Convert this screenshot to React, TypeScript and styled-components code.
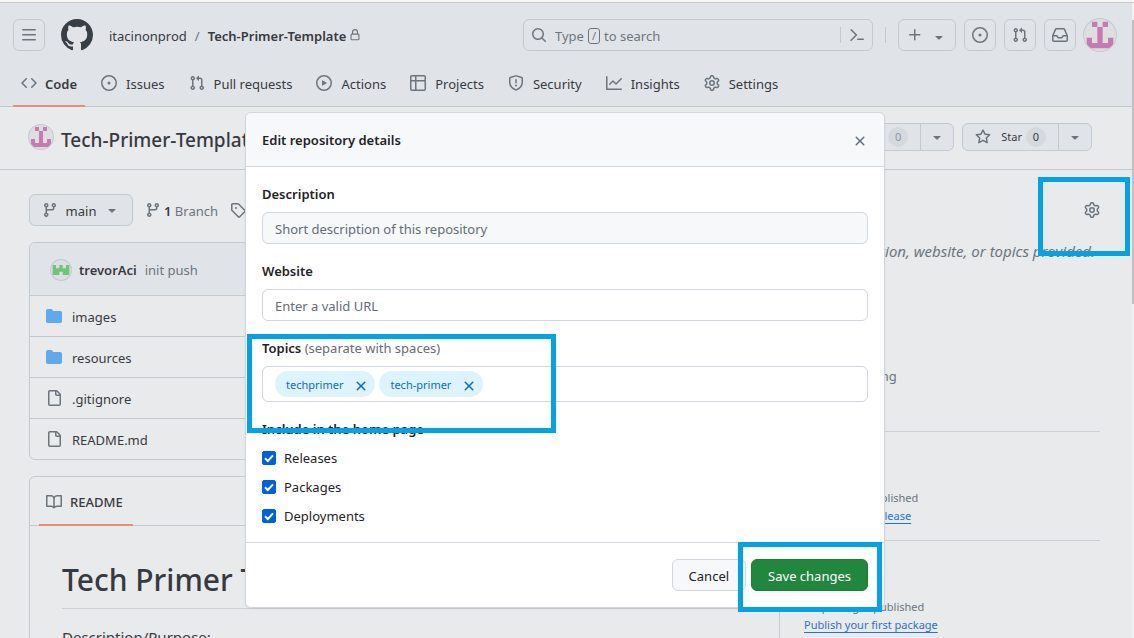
import React from 'react';
import styled, { createGlobalStyle } from 'styled-components';

const color = {
  canvas: '#ffffff',
  subtle: '#f6f8fa',
  border: '#d0d7de',
  borderMuted: '#dbe0e5',
  text: '#1f2328',
  muted: '#656d76',
  link: '#0969da',
  tabMark: '#fd8c73',
  folder: '#54aeff',
  chip: '#ddf4ff',
  success: '#1f883d',
  marker: '#00a2e8',
};

const GlobalStyle = createGlobalStyle`
  *, *::before, *::after { box-sizing: border-box; }
  body {
    margin: 0;
    overflow: hidden;
    background: ${color.canvas};
    color: ${color.text};
    font-family: "Noto Sans", "Open Sans", sans-serif;
    font-size: 13px;
    line-height: 20px;
  }
  button, input { font: inherit; color: inherit; }
  button { cursor: pointer; }
  h1, h2, p, ul { margin: 0; padding: 0; }
  ul { list-style: none; }
  a { color: inherit; text-decoration: none; }
`;

const paths = {
  bars: 'M1 2.75A.75.75 0 0 1 1.75 2h12.5a.75.75 0 0 1 0 1.5H1.75A.75.75 0 0 1 1 2.75Zm0 5A.75.75 0 0 1 1.75 7h12.5a.75.75 0 0 1 0 1.5H1.75A.75.75 0 0 1 1 7.75ZM1.75 12h12.5a.75.75 0 0 1 0 1.5H1.75a.75.75 0 0 1 0-1.5Z',
  mark: 'M8 0c4.42 0 8 3.58 8 8a8.013 8.013 0 0 1-5.45 7.59c-.4.08-.55-.17-.55-.38 0-.27.01-1.13.01-2.2 0-.75-.25-1.23-.54-1.48 1.78-.2 3.65-.88 3.65-3.95 0-.88-.31-1.59-.82-2.15.08-.2.36-1.02-.08-2.12 0 0-.67-.22-2.2.82-.64-.18-1.32-.27-2-.27-.68 0-1.36.09-2 .27-1.53-1.03-2.2-.82-2.2-.82-.44 1.1-.16 1.92-.08 2.12-.51.56-.82 1.28-.82 2.15 0 3.06 1.86 3.75 3.64 3.95-.23.2-.44.55-.51 1.07-.46.21-1.61.55-2.33-.66-.15-.24-.6-.83-1.23-.82-.67.01-.27.38.01.53.34.19.73.9.82 1.13.16.45.68 1.31 2.69.94 0 .67.01 1.3.01 1.49 0 .21-.15.45-.55.38A7.995 7.995 0 0 1 0 8c0-4.42 3.58-8 8-8Z',
  lock: 'M4 4a4 4 0 0 1 8 0v2h.25c.966 0 1.75.784 1.75 1.75v5.5A1.75 1.75 0 0 1 12.25 15h-8.5A1.75 1.75 0 0 1 2 13.25v-5.5C2 6.784 2.784 6 3.75 6H4Zm8.25 3.5h-8.5a.25.25 0 0 0-.25.25v5.5c0 .138.112.25.25.25h8.5a.25.25 0 0 0 .25-.25v-5.5a.25.25 0 0 0-.25-.25ZM10.5 6V4a2.5 2.5 0 1 0-5 0v2Z',
  search: 'M10.68 11.74a6 6 0 0 1-7.922-8.982 6 6 0 0 1 8.982 7.922l3.04 3.04a.749.749 0 0 1-.326 1.275.749.749 0 0 1-.734-.215ZM11.5 7a4.499 4.499 0 1 0-8.997 0A4.499 4.499 0 0 0 11.5 7Z',
  command: 'm6.354 8.04-4.773 4.773a.75.75 0 1 0 1.061 1.06L7.945 8.57a.75.75 0 0 0 0-1.06L2.642 2.206a.75.75 0 0 0-1.06 1.061L6.353 8.04ZM8.75 11.5a.75.75 0 0 0 0 1.5h5.5a.75.75 0 0 0 0-1.5h-5.5Z',
  plus: 'M7.75 2a.75.75 0 0 1 .75.75V7h4.25a.75.75 0 0 1 0 1.5H8.5v4.25a.75.75 0 0 1-1.5 0V8.5H2.75a.75.75 0 0 1 0-1.5H7V2.75A.75.75 0 0 1 7.75 2Z',
  caret: 'm4.427 7.427 3.396 3.396a.25.25 0 0 0 .354 0l3.396-3.396A.25.25 0 0 0 11.396 7H4.604a.25.25 0 0 0-.177.427Z',
  code: 'm11.28 3.22 4.25 4.25a.75.75 0 0 1 0 1.06l-4.25 4.25a.749.749 0 0 1-1.275-.326.749.749 0 0 1 .215-.734L13.94 8l-3.72-3.72a.749.749 0 0 1 .326-1.275.749.749 0 0 1 .734.215Zm-6.56 0a.751.751 0 0 1 1.042.018.751.751 0 0 1 .018 1.042L2.06 8l3.72 3.72a.749.749 0 0 1-.326 1.275.749.749 0 0 1-.734-.215L.47 8.53a.75.75 0 0 1 0-1.06Z',
  issue: 'M8 9.5a1.5 1.5 0 1 0 0-3 1.5 1.5 0 0 0 0 3ZM8 0a8 8 0 1 1 0 16A8 8 0 0 1 8 0ZM1.5 8a6.5 6.5 0 1 0 13 0 6.5 6.5 0 0 0-13 0Z',
  pull: 'M1.5 3.25a2.25 2.25 0 1 1 3 2.122v5.256a2.251 2.251 0 1 1-1.5 0V5.372A2.25 2.25 0 0 1 1.5 3.25Zm5.677-.177L9.573.677A.25.25 0 0 1 10 .854V2.5h1A2.5 2.5 0 0 1 13.5 5v5.628a2.251 2.251 0 1 1-1.5 0V5a1 1 0 0 0-1-1h-1v1.646a.25.25 0 0 1-.427.177L7.177 3.427a.25.25 0 0 1 0-.354ZM3.75 2.5a.75.75 0 1 0 0 1.5.75.75 0 0 0 0-1.5Zm0 9.5a.75.75 0 1 0 0 1.5.75.75 0 0 0 0-1.5Zm8.25.75a.75.75 0 1 0 1.5 0 .75.75 0 0 0-1.5 0Z',
  play: 'M8 0a8 8 0 1 1 0 16A8 8 0 0 1 8 0ZM1.5 8a6.5 6.5 0 1 0 13 0 6.5 6.5 0 0 0-13 0Zm4.879-2.773 4.264 2.559a.25.25 0 0 1 0 .428l-4.264 2.559A.25.25 0 0 1 6 10.559V5.442a.25.25 0 0 1 .379-.215Z',
  table: 'M0 1.75C0 .784.784 0 1.75 0h12.5C15.216 0 16 .784 16 1.75v12.5A1.75 1.75 0 0 1 14.25 16H1.75A1.75 1.75 0 0 1 0 14.25ZM6.5 6.5v8h7.75a.25.25 0 0 0 .25-.25V6.5Zm8-1.5V1.75a.25.25 0 0 0-.25-.25H6.5V5Zm-13 1.5v7.75c0 .138.112.25.25.25H5v-8ZM5 5V1.5H1.75a.25.25 0 0 0-.25.25V5Z',
  shield: 'M7.467.133a1.748 1.748 0 0 1 1.066 0l5.25 1.68A1.75 1.75 0 0 1 15 3.48V7c0 1.566-.32 3.182-1.303 4.682-.983 1.498-2.585 2.813-5.032 3.855a1.697 1.697 0 0 1-1.33 0c-2.447-1.042-4.049-2.357-5.032-3.855C1.32 10.182 1 8.566 1 7V3.48a1.75 1.75 0 0 1 1.217-1.667Zm.61 1.429a.25.25 0 0 0-.153 0l-5.25 1.68a.25.25 0 0 0-.174.238V7c0 1.358.275 2.666 1.057 3.86.784 1.194 2.121 2.34 4.366 3.297a.196.196 0 0 0 .154 0c2.245-.956 3.582-2.104 4.366-3.298C13.225 9.666 13.5 8.36 13.5 7V3.48a.251.251 0 0 0-.174-.237l-5.25-1.68ZM8.75 4.75v3a.75.75 0 0 1-1.5 0v-3a.75.75 0 0 1 1.5 0ZM9 10.5a1 1 0 1 1-2 0 1 1 0 0 1 2 0Z',
  graph: 'M1.5 1.75V13.5h13.75a.75.75 0 0 1 0 1.5H.75a.75.75 0 0 1-.75-.75V1.75a.75.75 0 0 1 1.5 0Zm14.28 2.53-5.25 5.25a.75.75 0 0 1-1.06 0L7 7.06 4.28 9.78a.751.751 0 0 1-1.042-.018.751.751 0 0 1-.018-1.042l3.25-3.25a.75.75 0 0 1 1.06 0L10 7.94l4.72-4.72a.751.751 0 0 1 1.042.018.751.751 0 0 1 .018 1.042Z',
  gear: 'M8 0a8.2 8.2 0 0 1 .701.031C9.444.095 9.99.645 10.16 1.29l.288 1.107c.018.066.079.158.212.224.231.114.454.243.668.386.123.082.233.09.299.071l1.103-.303c.644-.176 1.392.021 1.82.63.27.385.506.792.704 1.218.315.675.111 1.422-.364 1.891l-.814.806c-.049.048-.098.147-.088.294.016.257.016.515 0 .772-.01.147.038.246.088.294l.814.806c.475.469.679 1.216.364 1.891a7.977 7.977 0 0 1-.704 1.217c-.428.61-1.176.807-1.82.63l-1.102-.302c-.067-.019-.177-.011-.3.071a5.909 5.909 0 0 1-.668.386c-.133.066-.194.158-.211.224l-.29 1.106c-.168.646-.715 1.196-1.458 1.26a8.006 8.006 0 0 1-1.402 0c-.743-.064-1.289-.614-1.458-1.26l-.289-1.106c-.018-.066-.079-.158-.212-.224a5.738 5.738 0 0 1-.668-.386c-.123-.082-.233-.09-.299-.071l-1.103.303c-.644.176-1.392-.021-1.82-.63a8.12 8.12 0 0 1-.704-1.218c-.315-.675-.111-1.422.363-1.891l.815-.806c.05-.048.098-.147.088-.294a6.214 6.214 0 0 1 0-.772c.01-.147-.038-.246-.088-.294l-.815-.806C.635 6.045.431 5.298.746 4.623a7.92 7.92 0 0 1 .704-1.217c.428-.61 1.176-.807 1.82-.63l1.102.302c.067.019.177.011.3-.071.214-.143.437-.272.668-.386.133-.066.194-.158.211-.224l.29-1.106C6.009.645 6.556.095 7.299.03 7.53.01 7.764 0 8 0Zm-.571 1.525c-.036.003-.108.036-.137.146l-.289 1.105c-.147.561-.549.967-.998 1.189-.173.086-.34.183-.5.29-.417.278-.97.423-1.529.27l-1.103-.303c-.109-.03-.175.016-.195.045-.22.312-.412.644-.573.99-.014.031-.021.11.059.19l.815.806c.411.406.562.957.53 1.456a4.709 4.709 0 0 0 0 .582c.032.499-.119 1.05-.53 1.456l-.815.806c-.081.08-.073.159-.059.19.162.346.353.677.573.989.02.03.085.076.195.046l1.102-.303c.56-.153 1.113-.008 1.53.27.161.107.328.204.501.29.447.222.85.629.997 1.189l.289 1.105c.029.109.101.143.137.146a6.6 6.6 0 0 0 1.142 0c.036-.003.108-.036.137-.146l.289-1.105c.147-.561.549-.967.998-1.189.173-.086.34-.183.5-.29.417-.278.97-.423 1.529-.27l1.103.303c.109.029.175-.016.195-.045.22-.313.411-.644.573-.99.014-.031.021-.11-.059-.19l-.815-.806c-.411-.406-.562-.957-.53-1.456a4.709 4.709 0 0 0 0-.582c-.032-.499.119-1.05.53-1.456l.815-.806c.081-.08.073-.159.059-.19a6.464 6.464 0 0 0-.573-.989c-.02-.03-.085-.076-.195-.046l-1.102.303c-.56.153-1.113.008-1.53-.27a4.44 4.44 0 0 0-.501-.29c-.447-.222-.85-.629-.997-1.189l-.289-1.105c-.029-.11-.101-.143-.137-.146a6.6 6.6 0 0 0-1.142 0ZM11 8a3 3 0 1 1-6 0 3 3 0 0 1 6 0ZM9.5 8a1.5 1.5 0 1 0-3.001.001A1.5 1.5 0 0 0 9.5 8Z',
  branch: 'M9.5 3.25a2.25 2.25 0 1 1 3 2.122V6A2.5 2.5 0 0 1 10 8.5H6a1 1 0 0 0-1 1v1.128a2.251 2.251 0 1 1-1.5 0V5.372a2.25 2.25 0 1 1 1.5 0v1.836A2.493 2.493 0 0 1 6 7h4a1 1 0 0 0 1-1v-.628A2.25 2.25 0 0 1 9.5 3.25Zm-6 0a.75.75 0 1 0 1.5 0 .75.75 0 0 0-1.5 0Zm8.25-.75a.75.75 0 1 0 0 1.5.75.75 0 0 0 0-1.5ZM4.25 12a.75.75 0 1 0 0 1.5.75.75 0 0 0 0-1.5Z',
  tag: 'M1 7.775V2.75C1 1.784 1.784 1 2.75 1h5.025c.464 0 .91.184 1.238.513l6.25 6.25a1.75 1.75 0 0 1 0 2.474l-5.026 5.026a1.75 1.75 0 0 1-2.474 0l-6.25-6.25A1.752 1.752 0 0 1 1 7.775Zm1.5 0c0 .066.026.13.073.177l6.25 6.25a.25.25 0 0 0 .354 0l5.025-5.025a.25.25 0 0 0 0-.354l-6.25-6.25a.25.25 0 0 0-.177-.073H2.75a.25.25 0 0 0-.25.25ZM6 5a1 1 0 1 1 0 2 1 1 0 0 1 0-2Z',
  folder: 'M1.75 1A1.75 1.75 0 0 0 0 2.75v10.5C0 14.216.784 15 1.75 15h12.5A1.75 1.75 0 0 0 16 13.25v-8.5A1.75 1.75 0 0 0 14.25 3H7.5a.25.25 0 0 1-.2-.1l-.9-1.2C6.07 1.26 5.55 1 5 1H1.75Z',
  file: 'M2 1.75C2 .784 2.784 0 3.75 0h6.586c.464 0 .909.184 1.237.513l2.914 2.914c.329.328.513.773.513 1.237v9.586A1.75 1.75 0 0 1 13.25 16h-9.5A1.75 1.75 0 0 1 2 14.25Zm1.75-.25a.25.25 0 0 0-.25.25v12.5c0 .138.112.25.25.25h9.5a.25.25 0 0 0 .25-.25V6h-2.75A1.75 1.75 0 0 1 9 4.25V1.5Zm6.75.062V4.25c0 .138.112.25.25.25h2.688l-.011-.013-2.914-2.914-.013-.011Z',
  book: 'M0 1.75A.75.75 0 0 1 .75 1h4.253c1.227 0 2.317.59 3 1.501A3.743 3.743 0 0 1 11.006 1h4.245a.75.75 0 0 1 .75.75v10.5a.75.75 0 0 1-.75.75h-4.507a2.25 2.25 0 0 0-1.591.659l-.622.621a.75.75 0 0 1-1.06 0l-.622-.621A2.25 2.25 0 0 0 5.258 13H.75a.75.75 0 0 1-.75-.75Zm7.251 10.324.004-5.073-.002-2.253A2.25 2.25 0 0 0 5.003 2.5H1.5v9h3.757a3.75 3.75 0 0 1 1.994.574ZM8.755 4.75l-.004 7.322a3.752 3.752 0 0 1 1.992-.572H14.5v-9h-3.495a2.25 2.25 0 0 0-2.25 2.25Z',
  close: 'M3.72 3.72a.75.75 0 0 1 1.06 0L8 6.94l3.22-3.22a.749.749 0 0 1 1.275.326.749.749 0 0 1-.215.734L9.06 8l3.22 3.22a.749.749 0 0 1-.326 1.275.749.749 0 0 1-.734-.215L8 9.06l-3.22 3.22a.751.751 0 0 1-1.042-.018.751.751 0 0 1-.018-1.042L6.94 8 3.72 4.78a.75.75 0 0 1 0-1.06Z',
  inbox: 'M2.8 2.06A1.75 1.75 0 0 1 4.41 1h7.18c.7 0 1.333.417 1.61 1.06l2.74 6.395c.04.093.06.194.06.295v4.5A1.75 1.75 0 0 1 14.25 15H1.75A1.75 1.75 0 0 1 0 13.25v-4.5c0-.101.02-.202.06-.295Zm1.61.44a.25.25 0 0 0-.23.152L1.887 8H4.75a.75.75 0 0 1 .6.3L6.625 10h2.75l1.275-1.7a.75.75 0 0 1 .6-.3h2.863L11.82 2.652a.25.25 0 0 0-.23-.152Zm10.09 7h-2.875l-1.275 1.7a.75.75 0 0 1-.6.3h-3.5a.75.75 0 0 1-.6-.3L4.375 9.5H1.5v3.75c0 .138.112.25.25.25h12.5a.25.25 0 0 0 .25-.25Z',
  star: 'M8 .25a.75.75 0 0 1 .673.418l1.882 3.815 4.21.612a.75.75 0 0 1 .416 1.279l-3.046 2.97.719 4.192a.751.751 0 0 1-1.088.791L8 12.347l-3.766 1.98a.75.75 0 0 1-1.088-.79l.72-4.194L.818 6.374a.75.75 0 0 1 .416-1.28l4.21-.611L7.327.668A.75.75 0 0 1 8 .25Zm0 2.445L6.615 5.5a.75.75 0 0 1-.564.41l-3.097.45 2.24 2.184a.75.75 0 0 1 .216.664l-.528 3.084 2.769-1.456a.75.75 0 0 1 .698 0l2.77 1.456-.53-3.084a.75.75 0 0 1 .216-.664l2.24-2.183-3.096-.45a.75.75 0 0 1-.564-.41L8 2.694Z',
};

type IconName = keyof typeof paths;

const Svg = styled.svg<{ $tone?: string }>`
  display: block;
  flex: none;
  fill: ${(p) => p.$tone ?? color.muted};
`;

function Icon({ name, size = 16, tone }: { name: IconName; size?: number; tone?: string }) {
  return (
    <Svg viewBox="0 0 16 16" width={size} height={size} $tone={tone} aria-hidden="true">
      <path fillRule="evenodd" d={paths[name]} />
    </Svg>
  );
}

const AvatarFrame = styled.svg`
  display: block;
  flex: none;
  border-radius: 50%;
  background: #f0f0f0;
  box-shadow: 0 0 0 1px ${color.border};
`;

const identicons = {
  pink: { tone: '#d674b6', rows: ['.X.X.', '..X..', '..X..', 'X.X.X', 'XXXXX'] },
  green: { tone: '#68cf75', rows: ['.....', 'X.X.X', 'XXXXX', 'XX.XX', '.....'] },
};

function Avatar({ kind, size }: { kind: keyof typeof identicons; size: number }) {
  const { tone, rows } = identicons[kind];
  const cells = rows.flatMap((row, y) =>
    [...row].map((cell, x) => (cell === 'X' ? `M${1 + x * 2} ${1 + y * 2}h2v2h-2Z` : '')),
  );
  return (
    <AvatarFrame viewBox="0 0 12 12" width={size} height={size} aria-hidden="true">
      <path d={cells.join('')} fill={tone} />
    </AvatarFrame>
  );
}

/* Text beside an icon, dropped so that its x-height centres on the icon */
const Label = styled.span`
  padding-top: 2px;
`;

/* Window frame */

const Window = styled.div`
  display: flex;
  flex-direction: column;
  height: 100vh;
  overflow: hidden;
`;

const WindowEdge = styled.div`
  flex: none;
  height: 3px;
  background: #f7f7f7;
  border-bottom: 1px solid #c8c8c8;
`;

const Viewport = styled.div`
  flex: 1;
  min-height: 0;
  display: flex;
`;

const Page = styled.div`
  position: relative;
  flex: 1;
  min-width: 0;
  overflow: hidden;
`;

const ScrollTrack = styled.div`
  flex: none;
  width: 2px;
  padding-top: 17px;
  background: #f1f1f1;
`;

const ScrollThumb = styled.div`
  height: 46%;
  background: #c1c1c1;
`;

/* Global header */

const Header = styled.header`
  height: 104px;
  padding: 16px 16px 0 13px;
  background: ${color.subtle};
  border-bottom: 1px solid ${color.border};
`;

const HeaderRow = styled.div`
  display: flex;
  align-items: center;
  height: 32px;
`;

const SquareButton = styled.button`
  display: flex;
  align-items: center;
  justify-content: center;
  flex: none;
  width: 32px;
  height: 32px;
  padding: 0;
  background: transparent;
  border: 1px solid ${color.border};
  border-radius: 6px;
`;

const HomeLink = styled.a`
  margin: 0 16px;
`;

const Crumbs = styled.nav`
  display: flex;
  align-items: center;
  gap: 8px;
  white-space: nowrap;
`;

const CrumbCurrent = styled.a`
  display: flex;
  align-items: center;
  gap: 3px;
  font-weight: 600;
`;

const Slash = styled(Label)`
  color: ${color.muted};
`;

const HeaderTools = styled.div`
  display: flex;
  align-items: center;
  gap: 8px;
  margin-left: auto;
`;

const SearchBox = styled.button`
  display: flex;
  align-items: center;
  width: 350px;
  height: 32px;
  padding: 0 7px;
  background: transparent;
  border: 1px solid ${color.border};
  border-radius: 6px;
  color: ${color.muted};
`;

const SearchHint = styled(Label)`
  display: flex;
  align-items: center;
  gap: 4px;
  flex: 1;
  margin-left: 8px;
`;

const Key = styled.kbd`
  height: 16px;
  padding: 0 3px;
  border: 1px solid ${color.muted};
  border-radius: 3px;
  font-family: inherit;
  font-size: 11px;
  line-height: 14px;
`;

const Rule = styled.span<{ $space: number }>`
  width: 1px;
  height: 16px;
  margin: 0 ${(p) => p.$space}px;
  background: ${color.border};
`;

const CreateButton = styled(SquareButton)`
  gap: 8px;
  width: 58px;
`;

const CaretDrop = styled.span`
  padding-top: 4px;
`;

const Tabs = styled.nav`
  display: flex;
  gap: 8px;
  margin-top: 8px;
  height: 48px;
`;

const Tab = styled.a<{ $active?: boolean }>`
  display: flex;
  align-items: center;
  gap: ${(p) => (p.$active ? 8 : 9)}px;
  padding: 2px 8px 0;
  white-space: nowrap;
  border-bottom: 2px solid ${(p) => (p.$active ? color.tabMark : 'transparent')};
  font-weight: ${(p) => (p.$active ? 600 : 400)};
`;

/* Repository heading */

const RepoHead = styled.div`
  display: flex;
  align-items: center;
  height: 63px;
  padding: 0 40px 2px 29px;
  gap: 8px;
  border-bottom: 1px solid ${color.border};
`;

const RepoTitle = styled.h1`
  flex: 1;
  min-width: 0;
  padding-top: 6px;
  font-size: 19px;
  line-height: 28px;
  font-weight: 500;
  white-space: nowrap;
`;

const ActionGroup = styled.div`
  display: flex;
  flex: none;
  height: 28px;
  border: 1px solid ${color.border};
  border-radius: 6px;
  background: ${color.subtle};
  overflow: hidden;
`;

const ActionMain = styled.button`
  display: flex;
  align-items: center;
  gap: 4px;
  padding: 0 12px;
  border: 0;
  background: transparent;
  font-size: 11px;
`;

const ActionLabel = styled.span`
  margin-left: 6px;
`;

const ActionCaret = styled.button`
  display: flex;
  align-items: center;
  justify-content: center;
  width: 33px;
  padding: 0;
  border: 0;
  border-left: 1px solid ${color.border};
  background: transparent;
`;

const Counter = styled.span<{ $dim?: boolean }>`
  min-width: 20px;
  height: 20px;
  border-radius: 10px;
  background: #e7eaee;
  color: ${(p) => (p.$dim ? '#8c959f' : color.text)};
  line-height: 20px;
  text-align: center;
`;

/* Repository body */

const RepoBody = styled.main`
  display: grid;
  grid-template-columns: minmax(0, 1fr) 296px;
  gap: 24px;
  padding: 24px 32px 0 29px;
`;

const Column = styled.div`
  display: flex;
  flex-direction: column;
  gap: 16px;
`;

const Toolbar = styled.div`
  display: flex;
  align-items: center;
  gap: 12px;
  height: 32px;
  color: ${color.muted};
`;

const BranchButton = styled.button`
  display: flex;
  align-items: center;
  justify-content: space-between;
  width: 104px;
  height: 32px;
  padding: 0 12px;
  background: ${color.subtle};
  border: 1px solid ${color.border};
  border-radius: 6px;
  color: ${color.text};
`;

const ToolLink = styled.a`
  display: flex;
  align-items: center;
  gap: 3px;
`;

const Strong = styled.strong`
  font-weight: 600;
  color: ${color.text};
`;

const Box = styled.section`
  border: 1px solid ${color.border};
  border-radius: 6px;
`;

const CommitBar = styled.div`
  display: flex;
  align-items: center;
  gap: 8px;
  height: 52px;
  padding: 2px 21px 0;
  background: ${color.subtle};
  border-radius: 6px 6px 0 0;
  color: ${color.muted};
`;

const FileRow = styled.li`
  display: flex;
  align-items: center;
  gap: 10px;
  height: 41px;
  padding: 0 16px;
  border-top: 1px solid ${color.border};
`;

const ReadmeBar = styled.div`
  display: flex;
  height: 49px;
  padding: 0 9px;
  border-bottom: 1px solid ${color.border};
`;

const ReadmeTab = styled.a`
  display: flex;
  align-items: center;
  gap: 8px;
  height: 49px;
  padding: 2px 10px 0 7px;
  border-bottom: 2px solid ${color.tabMark};
  font-weight: 500;
`;

const ReadmeBody = styled.div`
  padding: 32px;
`;

const ReadmeTitle = styled.h1`
  margin-bottom: 16px;
  padding-bottom: 6px;
  border-bottom: 1px solid ${color.borderMuted};
  font-size: 30px;
  line-height: 44px;
  font-weight: 500;
`;

const ReadmeText = styled.p`
  font-size: 15px;
  line-height: 24px;
`;

const SideHeading = styled.h2`
  font-size: 15px;
  line-height: 24px;
  font-weight: 600;
`;

const AboutHead = styled.div`
  display: flex;
  align-items: center;
  justify-content: space-between;
  height: 32px;
`;

const BareButton = styled.button`
  display: flex;
  padding: 0;
  border: 0;
  background: transparent;
`;

const AboutText = styled.p`
  margin: 13px 0 16px;
  font-size: 15px;
  line-height: 24px;
  font-style: italic;
  text-align: center;
  color: ${color.muted};
  white-space: nowrap;
`;

const FactList = styled.ul`
  display: grid;
  gap: 9px;
  margin-bottom: 16px;
  color: ${color.muted};
`;

const Fact = styled.li`
  display: flex;
  align-items: center;
  gap: 10px;
`;

const SideSection = styled.section`
  display: flex;
  flex-direction: column;
  align-items: flex-start;
  height: 109px;
  padding-top: 24px;
  border-top: 1px solid ${color.borderMuted};
  font-size: 11px;
  line-height: 18px;
  color: ${color.muted};
`;

const SideNote = styled.p`
  margin-top: 9px;
`;

const SideLink = styled.a`
  color: ${color.link};
  text-decoration: underline;
  text-underline-offset: 3px;
`;

/* Dialog */

const Backdrop = styled.div`
  position: absolute;
  inset: 0;
  display: flex;
  justify-content: center;
  align-items: flex-start;
  padding: 109px 2px 0 0;
  background: rgba(140, 149, 159, 0.2);
`;

const Dialog = styled.div`
  position: relative;
  width: 640px;
  max-width: 100%;
  background: ${color.canvas};
  border: 1px solid ${color.border};
  border-radius: 6px;
  box-shadow: 0 1px 2px rgba(140, 149, 159, 0.2);
`;

const DialogHead = styled.div`
  display: flex;
  align-items: center;
  justify-content: space-between;
  height: 54px;
  padding: 0 16px;
  background: ${color.subtle};
  border-bottom: 1px solid ${color.border};
  border-radius: 6px 6px 0 0;
`;

const DialogTitle = styled.h2`
  font-size: 13px;
  line-height: 20px;
  font-weight: 600;
`;

const CloseButton = styled(BareButton)`
  padding-top: 2px;
`;

const DialogBody = styled.form`
  display: flex;
  flex-direction: column;
  gap: 17px;
  padding: 17px 16px 16px;
`;

const Field = styled.div`
  display: flex;
  flex-direction: column;
  gap: 8px;
`;

const FieldLabel = styled.label`
  font-weight: 600;
`;

const FieldNote = styled.span`
  font-weight: 400;
  color: ${color.muted};
`;

const TextInput = styled.input<{ $shaded?: boolean }>`
  width: 100%;
  height: 32px;
  padding: 2px 12px 0;
  background: ${(p) => (p.$shaded ? color.subtle : color.canvas)};
  border: 1px solid ${color.border};
  border-radius: 6px;
  outline: none;
  &::placeholder { color: ${color.muted}; opacity: 1; }
`;

const TopicBox = styled.div`
  display: flex;
  align-items: center;
  gap: 4px;
  height: 36px;
  padding: 0 12px;
  border: 1px solid ${color.border};
  border-radius: 6px;
`;

const Chip = styled.span`
  display: flex;
  align-items: center;
  gap: 10px;
  height: 26px;
  padding: 2px 6px 0 11px;
  border-radius: 13px;
  background: ${color.chip};
  color: ${color.link};
  font-size: 11px;
`;

const TopicInput = styled.input`
  flex: 1;
  min-width: 0;
  border: 0;
  outline: none;
`;

const Options = styled.fieldset`
  display: grid;
  gap: 9px;
  margin: 0;
  padding: 0;
  border: 0;
`;

const Legend = styled.legend`
  margin-bottom: 9px;
  padding: 0;
  font-weight: 600;
`;

const Option = styled.label`
  display: flex;
  align-items: center;
  gap: 8px;
`;

const Tick = styled.span`
  display: grid;
  width: 14px;
  height: 14px;
  > * { grid-area: 1 / 1; }
`;

const TickInput = styled.input`
  appearance: none;
  width: 14px;
  height: 14px;
  margin: 0;
  border: 1px solid ${color.muted};
  border-radius: 2px;
  &:checked { background: #0061df; border-color: #0061df; }
  & + svg { visibility: hidden; }
  &:checked + svg { visibility: visible; }
`;

const TickMark = styled.svg`
  pointer-events: none;
  fill: none;
  stroke: #fff;
  stroke-width: 2;
`;

const DialogFoot = styled.div`
  display: flex;
  justify-content: flex-end;
  gap: 5px;
  padding: 16px;
  border-top: 1px solid ${color.border};
`;

const Button = styled.button<{ $primary?: boolean }>`
  height: 32px;
  padding: 2px 16px 0;
  border: 1px solid ${(p) => (p.$primary ? '#1c7c38' : color.border)};
  border-radius: 6px;
  background: ${(p) => (p.$primary ? color.success : color.subtle)};
  color: ${(p) => (p.$primary ? '#fff' : color.text)};
`;

/* Highlight frames that sit over the interface */

const Marker = styled.div`
  position: absolute;
  border: 5px solid ${color.marker};
  pointer-events: none;
`;

const TopicMarker = styled(Marker)`
  left: 1px;
  top: 221px;
  width: 309px;
  height: 99px;
`;

const SaveMarker = styled(Marker)`
  right: 2px;
  bottom: -5px;
  width: 144px;
  height: 70px;
`;

const GearMarker = styled(Marker)`
  right: 2px;
  top: 174px;
  width: 92px;
  height: 79px;
`;

const tabs: { icon: IconName; label: string }[] = [
  { icon: 'code', label: 'Code' },
  { icon: 'issue', label: 'Issues' },
  { icon: 'pull', label: 'Pull requests' },
  { icon: 'play', label: 'Actions' },
  { icon: 'table', label: 'Projects' },
  { icon: 'shield', label: 'Security' },
  { icon: 'graph', label: 'Insights' },
  { icon: 'gear', label: 'Settings' },
];

const files: { icon: IconName; name: string }[] = [
  { icon: 'folder', name: 'images' },
  { icon: 'folder', name: 'resources' },
  { icon: 'file', name: '.gitignore' },
  { icon: 'file', name: 'README.md' },
];

const facts: { icon: IconName; label: string }[] = [
  { icon: 'book', label: 'Readme' },
  { icon: 'graph', label: 'Activity' },
  { icon: 'star', label: '0 stars' },
  { icon: 'issue', label: '0 watching' },
  { icon: 'branch', label: '0 forks' },
];

export default function App() {
  return (
    <Window>
      <GlobalStyle />
      <WindowEdge />
      <Viewport>
        <Page>
          <Header>
            <HeaderRow>
              <SquareButton aria-label="Open menu"><Icon name="bars" /></SquareButton>
              <HomeLink href="#" aria-label="Home"><Icon name="mark" size={32} tone="#24292f" /></HomeLink>
              <Crumbs>
                <a href="#"><Label as="div">itacinonprod</Label></a>
                <Slash>/</Slash>
                <CrumbCurrent href="#"><Label>Tech-Primer-Template</Label><Icon name="lock" size={12} /></CrumbCurrent>
              </Crumbs>
              <HeaderTools>
                <SearchBox>
                  <Icon name="search" />
                  <SearchHint>Type <Key>/</Key> to search</SearchHint>
                  <Rule $space={8} />
                  <Icon name="command" />
                </SearchBox>
                <Rule $space={4} />
                <CreateButton aria-label="Create new">
                  <Icon name="plus" />
                  <CaretDrop><Icon name="caret" /></CaretDrop>
                </CreateButton>
                <SquareButton aria-label="Issues"><Icon name="issue" /></SquareButton>
                <SquareButton aria-label="Pull requests"><Icon name="pull" /></SquareButton>
                <SquareButton aria-label="Notifications"><Icon name="inbox" /></SquareButton>
                <Avatar kind="pink" size={32} />
              </HeaderTools>
            </HeaderRow>
            <Tabs>
              {tabs.map((tab, i) => (
                <Tab key={tab.label} href="#" $active={i === 0}>
                  <Icon name={tab.icon} />
                  <Label>{tab.label}</Label>
                </Tab>
              ))}
            </Tabs>
          </Header>

          <RepoHead>
            <Avatar kind="pink" size={24} />
            <RepoTitle>Tech-Primer-Template</RepoTitle>
            <ActionGroup>
              <ActionMain><Icon name="branch" /><ActionLabel>Fork</ActionLabel><Counter $dim>0</Counter></ActionMain>
              <ActionCaret aria-label="Fork options"><Icon name="caret" /></ActionCaret>
            </ActionGroup>
            <ActionGroup>
              <ActionMain><Icon name="star" /><ActionLabel>Star</ActionLabel><Counter>0</Counter></ActionMain>
              <ActionCaret aria-label="Star options"><Icon name="caret" /></ActionCaret>
            </ActionGroup>
          </RepoHead>

          <RepoBody>
            <Column>
              <Toolbar>
                <BranchButton><Icon name="branch" /><Label>main</Label><Icon name="caret" /></BranchButton>
                <ToolLink href="#"><Icon name="branch" /><Label><Strong>1</Strong> Branch</Label></ToolLink>
                <ToolLink href="#"><Icon name="tag" /><Label><Strong>0</Strong> Tags</Label></ToolLink>
              </Toolbar>
              <Box>
                <CommitBar><Avatar kind="green" size={20} /><Strong>trevorAci</Strong> init push</CommitBar>
                <ul>
                  {files.map((file) => (
                    <FileRow key={file.name}>
                      <Icon name={file.icon} tone={file.icon === 'folder' ? color.folder : undefined} />
                      <Label as="a" href="#">{file.name}</Label>
                    </FileRow>
                  ))}
                </ul>
              </Box>
              <Box>
                <ReadmeBar><ReadmeTab href="#"><Icon name="book" />README</ReadmeTab></ReadmeBar>
                <ReadmeBody>
                  <ReadmeTitle>Tech Primer Template</ReadmeTitle>
                  <ReadmeText>Description/Purpose:</ReadmeText>
                </ReadmeBody>
              </Box>
            </Column>
            <aside>
              <AboutHead>
                <SideHeading>About</SideHeading>
                <BareButton aria-label="Edit repository details"><Icon name="gear" /></BareButton>
              </AboutHead>
              <AboutText>No description, website, or topics provided.</AboutText>
              <FactList>
                {facts.map((fact) => (
                  <Fact key={fact.label}><Icon name={fact.icon} />{fact.label}</Fact>
                ))}
              </FactList>
              <SideSection>
                <SideHeading>Releases</SideHeading>
                <SideNote>No releases published</SideNote>
                <SideLink href="#">Create a new release</SideLink>
              </SideSection>
              <SideSection>
                <SideHeading>Packages</SideHeading>
                <SideNote>No packages published</SideNote>
                <SideLink href="#">Publish your first package</SideLink>
              </SideSection>
            </aside>
          </RepoBody>

          <Backdrop>
            <Dialog role="dialog" aria-labelledby="dialog-title">
              <DialogHead>
                <DialogTitle id="dialog-title">Edit repository details</DialogTitle>
                <CloseButton aria-label="Close"><Icon name="close" /></CloseButton>
              </DialogHead>
              <DialogBody id="details">
                <Field>
                  <FieldLabel htmlFor="description">Description</FieldLabel>
                  <TextInput id="description" $shaded placeholder="Short description of this repository" />
                </Field>
                <Field>
                  <FieldLabel htmlFor="website">Website</FieldLabel>
                  <TextInput id="website" placeholder="Enter a valid URL" />
                </Field>
                <Field>
                  <FieldLabel htmlFor="topics">Topics <FieldNote>(separate with spaces)</FieldNote></FieldLabel>
                  <TopicBox>
                    {['techprimer', 'tech-primer'].map((topic) => (
                      <Chip key={topic}>
                        {topic}
                        <CloseButton type="button" aria-label={`Remove ${topic}`}><Icon name="close" tone={color.link} /></CloseButton>
                      </Chip>
                    ))}
                    <TopicInput id="topics" />
                  </TopicBox>
                </Field>
                <Options>
                  <Legend>Include in the home page</Legend>
                  {['Releases', 'Packages', 'Deployments'].map((name) => (
                    <Option key={name}>
                      <Tick>
                        <TickInput type="checkbox" defaultChecked />
                        <TickMark viewBox="0 0 14 14" width="14" height="14"><path d="M3 7.2 5.8 10 11 4.4" /></TickMark>
                      </Tick>
                      {name}
                    </Option>
                  ))}
                </Options>
              </DialogBody>
              <DialogFoot>
                <Button type="button">Cancel</Button>
                <Button type="submit" form="details" $primary>Save changes</Button>
              </DialogFoot>
              <TopicMarker />
              <SaveMarker />
            </Dialog>
          </Backdrop>
          <GearMarker />
        </Page>
        <ScrollTrack><ScrollThumb /></ScrollTrack>
      </Viewport>
    </Window>
  );
}
